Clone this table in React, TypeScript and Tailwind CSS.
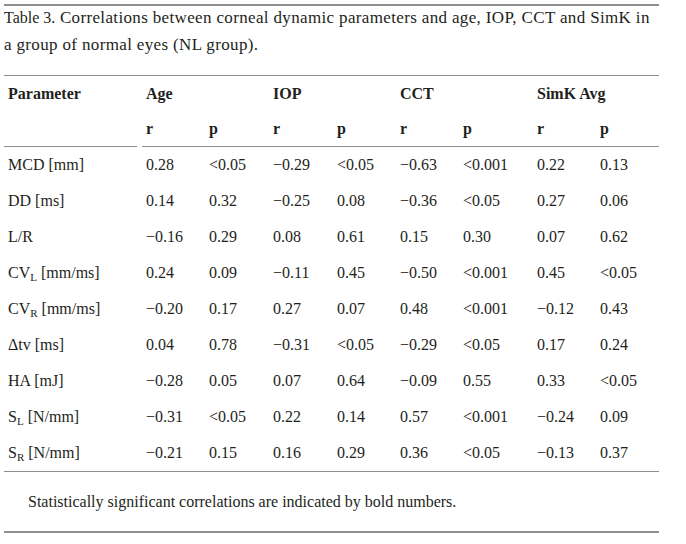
import React from "react";

type Cell = React.ReactNode;

const sub = "text-[11px] align-baseline relative top-[3px]";

const rows: Cell[][] = [
  ["MCD [mm]", "0.28", "<0.05", "−0.29", "<0.05", "−0.63", "<0.001", "0.22", "0.13"],
  ["DD [ms]", "0.14", "0.32", "−0.25", "0.08", "−0.36", "<0.05", "0.27", "0.06"],
  ["L/R", "−0.16", "0.29", "0.08", "0.61", "0.15", "0.30", "0.07", "0.62"],
  [
    <span>
      CV<sub className={sub}>L</sub> [mm/ms]
    </span>,
    "0.24", "0.09", "−0.11", "0.45", "−0.50", "<0.001", "0.45", "<0.05",
  ],
  [
    <span>
      CV<sub className={sub}>R</sub> [mm/ms]
    </span>,
    "−0.20", "0.17", "0.27", "0.07", "0.48", "<0.001", "−0.12", "0.43",
  ],
  ["Δtv [ms]", "0.04", "0.78", "−0.31", "<0.05", "−0.29", "<0.05", "0.17", "0.24"],
  ["HA [mJ]", "−0.28", "0.05", "0.07", "0.64", "−0.09", "0.55", "0.33", "<0.05"],
  [
    <span>
      S<sub className={sub}>L</sub> [N/mm]
    </span>,
    "−0.31", "<0.05", "0.22", "0.14", "0.57", "<0.001", "−0.24", "0.09",
  ],
  [
    <span>
      S<sub className={sub}>R</sub> [N/mm]
    </span>,
    "−0.21", "0.15", "0.16", "0.29", "0.36", "<0.05", "−0.13", "0.37",
  ],
];

const grid =
  "grid grid-cols-[138px_63px_64px_64px_63px_63px_74px_63px_1fr]";

export default function App() {
  return (
    <div className="w-[686px] h-[544px] bg-white font-['Liberation_Serif',serif] text-[#231f20]">
      <div className="ml-[4px] w-[655px] pt-[4px]">
        <div className="h-[2px] bg-[#8e8e8e]" />
        <div className="h-[69px]">
          <div className="relative -top-[2px] text-[17px] leading-[27px] tracking-[0.35px] whitespace-nowrap">
            <span className="text-[16px] tracking-[0px]">Table 3.</span> Correlations between corneal dynamic parameters and age, IOP, CCT and SimK in
            <br />
            a group of normal eyes (NL group).
          </div>
        </div>
        <div className="h-px bg-[#8e8e8e]" />
        <div className="text-[16px]">
          <div className={`${grid} h-[35px] items-center font-bold`}>
            <div className="pl-[4px]">Parameter</div>
            <div className="pl-[4px] col-span-2">Age</div>
            <div className="pl-[4px] col-span-2">IOP</div>
            <div className="pl-[4px] col-span-2">CCT</div>
            <div className="pl-[4px] col-span-2">SimK Avg</div>
          </div>
          <div className={`${grid} h-[35px] items-center font-bold`}>
            <div />
            <div className="pl-[4px]">r</div>
            <div className="pl-[4px]">p</div>
            <div className="pl-[4px]">r</div>
            <div className="pl-[4px]">p</div>
            <div className="pl-[4px]">r</div>
            <div className="pl-[4px]">p</div>
            <div className="pl-[4px]">r</div>
            <div className="pl-[4px]">p</div>
          </div>
          <div className="flex h-px">
            <div className="w-[133px] bg-[#8e8e8e]" />
            <div className="w-[5px]" />
            <div className="flex-1 bg-[#8e8e8e]" />
          </div>
          {rows.map((r, i) => (
            <div key={i} className={`${grid} h-[36px] items-center`}>
              {r.map((c, j) => (
                <div key={j} className="pl-[4px] whitespace-nowrap">
                  {c}
                </div>
              ))}
            </div>
          ))}
          <div className="h-px bg-[#8e8e8e]" />
          <div className="h-[59px] flex items-center pl-[24px]">
            Statistically significant correlations are indicated by bold numbers.
          </div>
          <div className="h-[2px] bg-[#8e8e8e]" />
        </div>
      </div>
    </div>
  );
}
